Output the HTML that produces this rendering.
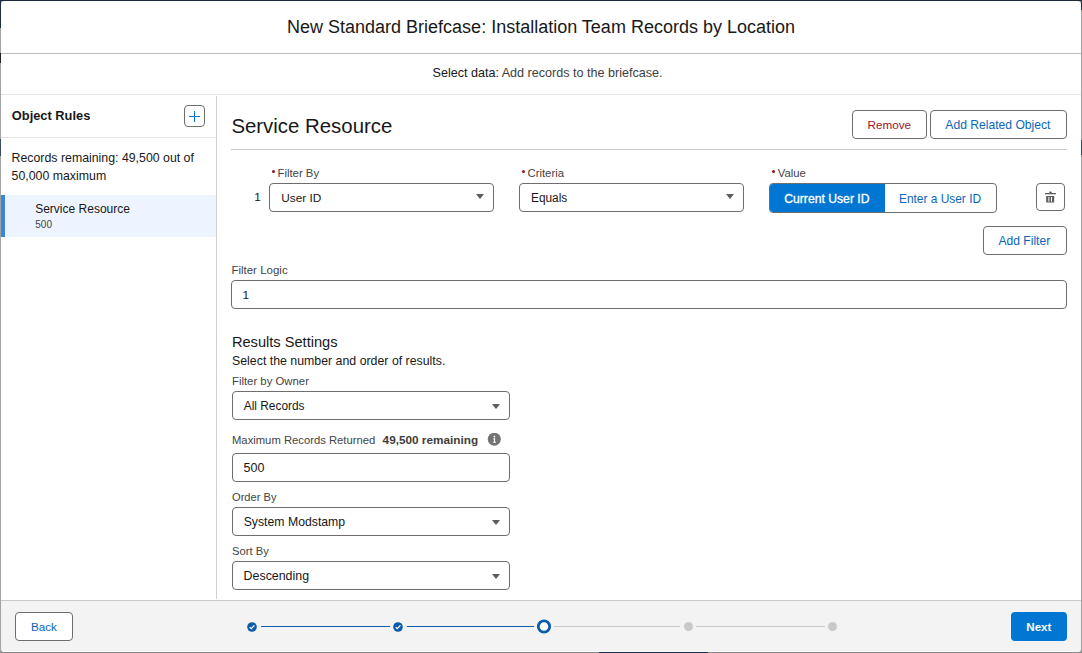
<!DOCTYPE html>
<html><head><meta charset="utf-8">
<style>
*{box-sizing:border-box;margin:0;padding:0}
html,body{width:1082px;height:653px;overflow:hidden;background:#a3a3a3;font-family:"Liberation Sans",sans-serif;color:#181818}
.a{position:absolute}
.t{position:absolute;white-space:nowrap;line-height:1}
.bx{position:absolute;border:1px solid #6e6e6e;border-radius:4px;background:#fff}
.arr{position:absolute;width:0;height:0;border-left:4.5px solid transparent;border-right:4.5px solid transparent;border-top:5.5px solid #5c5c5c}
.lb{color:#444}
.bl{color:#0a66bd}
.rq{position:absolute;width:3px;height:3px;border-radius:50%;background:#8e1a2a}
</style></head><body>
<!-- backdrop pieces -->
<div class="a" style="left:0;top:0;width:1082px;height:1px;background:#1b2a3c"></div>
<div class="a" style="left:0;top:0;width:1px;height:28px;background:#1e2d40"></div>
<div class="a" style="left:0;top:53px;width:1px;height:10px;background:#222"></div>
<div class="a" style="left:0;top:139px;width:1px;height:17px;background:#3a4a60"></div>
<div class="a" style="left:1081px;top:0;width:1px;height:10px;background:#1e3550"></div>
<div class="a" style="left:1081px;top:140px;width:1px;height:15px;background:#2a4a66"></div>
<div class="a" style="left:0;top:652px;width:1082px;height:1px;background:#8a8a8a"></div>
<div class="a" style="left:599px;top:652px;width:109px;height:1px;background:#16325c"></div>

<div class="a" id="modal" style="left:1px;top:1px;width:1080px;height:651px;background:#fff;border-radius:4px;overflow:hidden">
<div style="position:absolute;left:-1px;top:-1px;width:1082px;height:653px">
  <!-- header -->
  <div class="a" style="left:0;top:53px;width:1082px;height:1px;background:#bdbdbd"></div>
  <div class="t" style="left:0;width:1082px;text-align:center;top:18.3px;font-size:18px">New Standard Briefcase: Installation Team Records by Location</div>
  <div class="t" style="left:432.5px;top:67.1px;font-size:12.58px">Select data: <span style="color:#3e3e3c">Add records to the briefcase.</span></div>
  <div class="a" style="left:0;top:94px;width:1082px;height:1px;background:#e5e5e5"></div>

  <!-- left panel -->
  <div class="a" style="left:216px;top:96px;width:1px;height:503px;background:#d0d0d0"></div>
  <div class="t" style="left:11.8px;top:110px;font-size:12.85px;font-weight:bold">Object Rules</div>
  <div class="bx" style="left:184px;top:105px;width:21px;height:22px"></div>
  <div class="a" style="left:189px;top:115.5px;width:11px;height:1.2px;background:#0176d3"></div>
  <div class="a" style="left:193.9px;top:110.5px;width:1.2px;height:11px;background:#0176d3"></div>
  <div class="a" style="left:0;top:137px;width:216px;height:1px;background:#e5e5e5"></div>
  <div class="t" style="left:11.6px;top:149px;font-size:12.34px;line-height:18px">Records remaining: 49,500 out of<br>50,000 maximum</div>
  <div class="a" style="left:1px;top:195px;width:215px;height:42px;background:#eef4ff"></div>
  <div class="a" style="left:1px;top:195px;width:4px;height:42px;background:#3a85e0"></div>
  <div class="t" style="left:35.2px;top:202.9px;font-size:12px">Service Resource</div>
  <div class="t lb" style="left:35.3px;top:219.8px;font-size:10px">500</div>

  <!-- right panel header -->
  <div class="t" style="left:231.4px;top:115.9px;font-size:20.4px">Service Resource</div>
  <div class="bx" style="left:852px;top:110px;width:75px;height:29px"></div>
  <div class="t" style="left:867.6px;top:118.8px;font-size:11.7px;color:#a0121e">Remove</div>
  <div class="bx" style="left:930px;top:110px;width:137px;height:29px"></div>
  <div class="t bl" style="left:945.3px;top:118.6px;font-size:12.14px">Add Related Object</div>
  <div class="a" style="left:231px;top:149px;width:836px;height:1px;background:#c9c9c9"></div>

  <!-- filter row -->
  <div class="t" style="left:254.3px;top:192.2px;font-size:11.84px">1</div>
  <div class="rq" style="left:272px;top:170px"></div>
  <div class="t lb" style="left:277.5px;top:167.5px;font-size:11.35px">Filter By</div>
  <div class="bx" style="left:269px;top:183px;width:225px;height:29px"></div>
  <div class="t" style="left:281.2px;top:192.9px;font-size:11.84px">User ID</div>
  <div class="arr" style="left:476px;top:194.2px"></div>

  <div class="rq" style="left:522px;top:170px"></div>
  <div class="t lb" style="left:527.5px;top:167.5px;font-size:11.33px">Criteria</div>
  <div class="bx" style="left:519px;top:183px;width:225px;height:29px"></div>
  <div class="t" style="left:531px;top:192.9px;font-size:11.87px">Equals</div>
  <div class="arr" style="left:726px;top:194.2px"></div>

  <div class="rq" style="left:772px;top:170px"></div>
  <div class="t lb" style="left:777.8px;top:167.5px;font-size:11.3px">Value</div>
  <div class="a" style="left:769px;top:183px;width:228px;height:30px;border:1px solid #6e6e6e;border-radius:4px;background:#fff;overflow:hidden">
    <div class="a" style="left:-1px;top:-1px;width:116px;height:30px;background:#0176d3"></div>
  </div>
  <div class="t" style="left:784.2px;top:192.9px;font-size:12.19px;color:#fff;-webkit-text-stroke:0.3px #fff">Current User ID</div>
  <div class="t bl" style="left:899px;top:193.9px;font-size:11.92px">Enter a User ID</div>

  <div class="bx" style="left:1036px;top:183px;width:29px;height:28px"></div>
  <svg class="a" style="left:1044px;top:190px" width="13" height="14" viewBox="0 0 13 14">
    <path d="M1 3.6h11" stroke="#5c5c5c" stroke-width="1.2"/>
    <path d="M5.1 3.3 L5.7 1.5 H7.3 L7.9 3.3z" fill="#5c5c5c"/>
    <path d="M2.2 6 H10.2 V12 Q10.2 12.6 9.6 12.6 H2.8 Q2.2 12.6 2.2 12z" fill="#5c5c5c"/>
    <rect x="4.4" y="7" width="1" height="4.6" fill="#fff"/>
    <rect x="7" y="7" width="1" height="4.6" fill="#fff"/>
  </svg>

  <div class="bx" style="left:983px;top:226px;width:84px;height:29px"></div>
  <div class="t bl" style="left:998.5px;top:234.7px;font-size:12.09px">Add Filter</div>

  <!-- filter logic -->
  <div class="t lb" style="left:231.4px;top:265.3px;font-size:11.5px">Filter Logic</div>
  <div class="bx" style="left:231px;top:280px;width:836px;height:29px"></div>
  <div class="t" style="left:242.6px;top:289.7px;font-size:11.84px">1</div>

  <!-- results settings -->
  <div class="t" style="left:231.9px;top:334.5px;font-size:14.64px">Results Settings</div>
  <div class="t" style="left:232px;top:354.7px;font-size:12.35px">Select the number and order of results.</div>

  <div class="t lb" style="left:232px;top:375.6px;font-size:11.35px">Filter by Owner</div>
  <div class="bx" style="left:232px;top:391px;width:278px;height:29px"></div>
  <div class="t" style="left:243.7px;top:401px;font-size:11.92px">All Records</div>
  <div class="arr" style="left:492px;top:403.5px"></div>

  <div class="t lb" style="left:232px;top:434.6px;font-size:11.25px">Maximum Records Returned</div>
  <div class="t" style="left:382.6px;top:434.4px;font-size:11.77px;font-weight:bold;color:#3e3e3c">49,500 remaining</div>
  <svg class="a" style="left:487px;top:433px" width="14" height="14" viewBox="0 0 14 14">
    <circle cx="7.3" cy="6.2" r="6.5" fill="#747474"/>
    <circle cx="7.4" cy="3.6" r="0.95" fill="#fff"/>
    <path d="M6.3 5.3h1.8v3.5h0.8v0.9H6.1v-0.9h0.8V6.2h-0.6z" fill="#fff"/>
  </svg>
  <div class="bx" style="left:232px;top:453px;width:278px;height:29px"></div>
  <div class="t" style="left:243.6px;top:461.5px;font-size:12.5px">500</div>

  <div class="t lb" style="left:232px;top:492px;font-size:11.11px">Order By</div>
  <div class="bx" style="left:232px;top:507px;width:278px;height:29px"></div>
  <div class="t" style="left:243.7px;top:515.6px;font-size:12.25px">System Modstamp</div>
  <div class="arr" style="left:492px;top:519.5px"></div>

  <div class="t lb" style="left:232px;top:545.7px;font-size:11.21px">Sort By</div>
  <div class="bx" style="left:232px;top:561px;width:278px;height:29px"></div>
  <div class="t" style="left:243.6px;top:569.8px;font-size:12.4px">Descending</div>
  <div class="arr" style="left:492px;top:573.5px"></div>

  <!-- footer -->
  <div class="a" style="left:0;top:600px;width:1082px;height:53px;background:#f3f3f3;border-top:1px solid #c9c9c9"></div>
  <div class="a" style="left:0;top:651px;width:1082px;height:1px;background:#f9f9f9"></div>
  <div class="bx" style="left:15px;top:612px;width:58px;height:29px"></div>
  <div class="t bl" style="left:30.9px;top:620.7px;font-size:11.7px">Back</div>
  <div class="a" style="left:1011px;top:612px;width:56px;height:29px;background:#0176d3;border-radius:4px"></div>
  <div class="t" style="left:1026.3px;top:620.6px;font-size:11.6px;font-weight:bold;color:#fff">Next</div>

  <!-- progress -->
  <div class="a" style="left:261px;top:626px;width:129px;height:1.4px;background:#0b5cab"></div>
  <div class="a" style="left:407px;top:626px;width:127px;height:1.4px;background:#0b5cab"></div>
  <div class="a" style="left:554px;top:626px;width:126px;height:1.2px;background:#c9c9c9"></div>
  <div class="a" style="left:696px;top:626px;width:129px;height:1.2px;background:#c9c9c9"></div>
  <svg class="a" style="left:247px;top:622px" width="10" height="10" viewBox="0 0 10 10">
    <circle cx="5" cy="5" r="4.8" fill="#0b5cab"/>
    <path d="M2.7 5.2 L4.3 6.7 L7.4 3.4" stroke="#fff" stroke-width="1.3" fill="none"/>
  </svg>
  <svg class="a" style="left:393px;top:622px" width="10" height="10" viewBox="0 0 10 10">
    <circle cx="5" cy="5" r="4.8" fill="#0b5cab"/>
    <path d="M2.7 5.2 L4.3 6.7 L7.4 3.4" stroke="#fff" stroke-width="1.3" fill="none"/>
  </svg>
  <svg class="a" style="left:536px;top:619px" width="16" height="16" viewBox="0 0 16 16">
    <circle cx="8" cy="7.5" r="5.7" fill="#fff" stroke="#0b5cab" stroke-width="2.8"/>
  </svg>
  <div class="a" style="left:684px;top:622px;width:9px;height:9px;border-radius:50%;background:#c9c9c9"></div>
  <div class="a" style="left:828px;top:622px;width:9px;height:9px;border-radius:50%;background:#c9c9c9"></div>
</div>
</div>
</body></html>
